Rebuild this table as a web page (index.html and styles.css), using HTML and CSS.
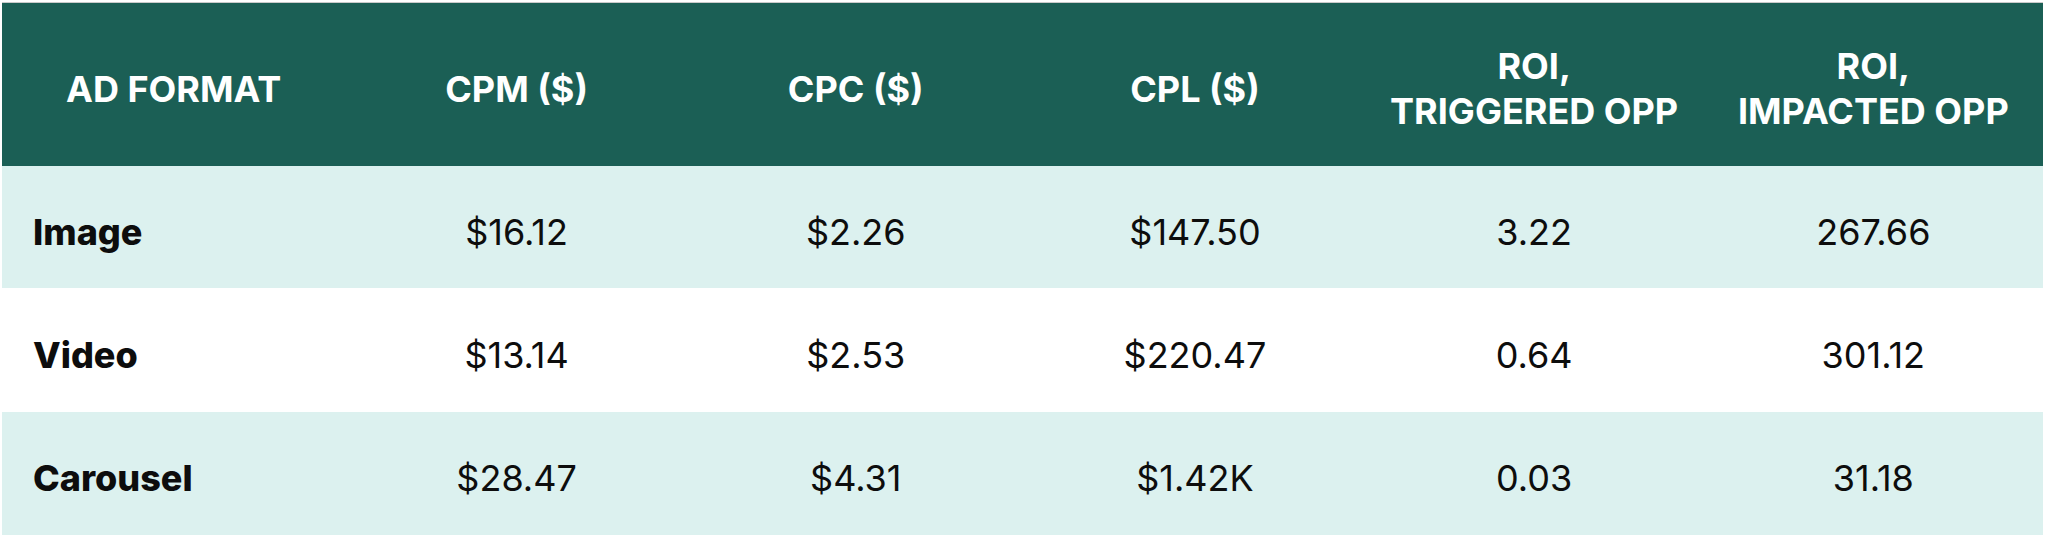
FILE: index.html
```html
<!DOCTYPE html>
<html lang="en">
<head>
<meta charset="utf-8">
<title>Ad format benchmarks</title>
<link rel="stylesheet" href="styles.css">
</head>
<body>
<div class="wrap">
  <div class="table">
    <div class="row head">
      <div class="cell first">AD FORMAT</div>
      <div class="cell">CPM ($)</div>
      <div class="cell">CPC ($)</div>
      <div class="cell">CPL ($)</div>
      <div class="cell">ROI,<br>TRIGGERED OPP</div>
      <div class="cell">ROI,<br>IMPACTED OPP</div>
    </div>
    <div class="row tint r1">
      <div class="cell first">Image</div>
      <div class="cell">$16.12</div>
      <div class="cell">$2.26</div>
      <div class="cell">$147.50</div>
      <div class="cell">3.22</div>
      <div class="cell">267.66</div>
    </div>
    <div class="row r2">
      <div class="cell first">Video</div>
      <div class="cell">$13.14</div>
      <div class="cell">$2.53</div>
      <div class="cell">$220.47</div>
      <div class="cell">0.64</div>
      <div class="cell">301.12</div>
    </div>
    <div class="row tint r3">
      <div class="cell first">Carousel</div>
      <div class="cell">$28.47</div>
      <div class="cell">$4.31</div>
      <div class="cell">$1.42K</div>
      <div class="cell">0.03</div>
      <div class="cell">31.18</div>
    </div>
  </div>
</div>
</body>
</html>
```
FILE: styles.css
```css
html, body {
  margin: 0;
  padding: 0;
  background: #ffffff;
}
body {
  font-family: Inter, "Liberation Sans", sans-serif;
  color: #0d0d0d;
}
.wrap {
  padding: 2px 5px 2px 2px;
}
.table {
  width: 2041px;
  border-top: 1px solid #cbcbcb;
}
.row {
  display: grid;
  grid-template-columns: 345px repeat(5, 339.2px);
}
.cell {
  display: flex;
  align-items: center;
  justify-content: center;
  text-align: center;
  font-size: 36px;
  line-height: 45px;
  padding-top: 10px;
  box-sizing: border-box;
}
.head {
  background: #1b5f55;
  height: 163px;
}
.head .cell {
  color: #ffffff;
  font-weight: 700;
  padding-top: 9px;
}
.head .cell.first {
  padding-left: 64px;
  font-weight: 700;
}
.cell.first {
  justify-content: flex-start;
  text-align: left;
  padding-left: 31px;
  font-weight: 800;
}
.tint {
  background: #dcf1ef;
}
.r1 { height: 122px; }
.r2 { height: 124px; }
.r3 { height: 123px; }
```
